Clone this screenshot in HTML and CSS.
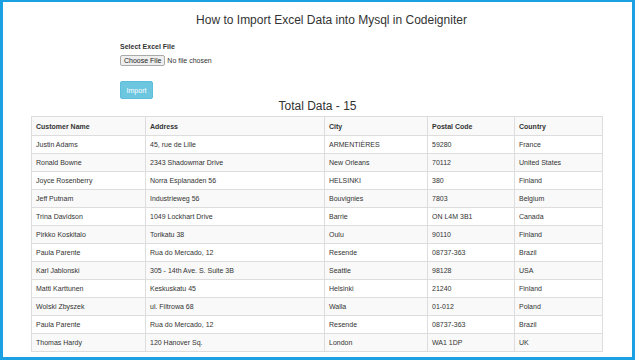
FILE: index.html
```html
<!DOCTYPE html>
<html lang="en">
<head>
    <meta charset="UTF-8">
    <meta name="viewport" content="width=device-width, initial-scale=1.0">
    <title>How to Import Excel Data into Mysql in Codeigniter</title>
    <link rel="stylesheet" href="styles.css">
</head>
<body>
    <div class="frame">
        <h3 class="title">How to Import Excel Data into Mysql in Codeigniter</h3>

        <form class="import-form" method="post" enctype="multipart/form-data">
            <label for="file">Select Excel File</label>
            <input type="file" name="file" id="file" required accept=".xls, .xlsx">
            <button type="submit" class="btn-info">Import</button>
        </form>

        <h3 class="total">Total Data - 15</h3>

        <table class="data-table">
            <colgroup>
                <col class="c-name">
                <col class="c-address">
                <col class="c-city">
                <col class="c-postal">
                <col class="c-country">
            </colgroup>
            <tbody>
                <tr>
                    <th>Customer Name</th>
                    <th>Address</th>
                    <th>City</th>
                    <th>Postal Code</th>
                    <th>Country</th>
                </tr>
                <tr><td>Justin Adams</td><td>45, rue de Lille</td><td>ARMENTIÈRES</td><td>59280</td><td>France</td></tr>
                <tr><td>Ronald Bowne</td><td>2343 Shadowmar Drive</td><td>New Orleans</td><td>70112</td><td>United States</td></tr>
                <tr><td>Joyce Rosenberry</td><td>Norra Esplanaden 56</td><td>HELSINKI</td><td>380</td><td>Finland</td></tr>
                <tr><td>Jeff Putnam</td><td>Industrieweg 56</td><td>Bouvignies</td><td>7803</td><td>Belgium</td></tr>
                <tr><td>Trina Davidson</td><td>1049 Lockhart Drive</td><td>Barrie</td><td>ON L4M 3B1</td><td>Canada</td></tr>
                <tr><td>Pirkko Koskitalo</td><td>Torikatu 38</td><td>Oulu</td><td>90110</td><td>Finland</td></tr>
                <tr><td>Paula Parente</td><td>Rua do Mercado, 12</td><td>Resende</td><td>08737-363</td><td>Brazil</td></tr>
                <tr><td>Karl Jablonski</td><td>305 - 14th Ave. S. Suite 3B</td><td>Seattle</td><td>98128</td><td>USA</td></tr>
                <tr><td>Matti Karttunen</td><td>Keskuskatu 45</td><td>Helsinki</td><td>21240</td><td>Finland</td></tr>
                <tr><td>Wolski Zbyszek</td><td>ul. Filtrowa 68</td><td>Walla</td><td>01-012</td><td>Poland</td></tr>
                <tr><td>Paula Parente</td><td>Rua do Mercado, 12</td><td>Resende</td><td>08737-363</td><td>Brazil</td></tr>
                <tr><td>Thomas Hardy</td><td>120 Hanover Sq.</td><td>London</td><td>WA1 1DP</td><td>UK</td></tr>
            </tbody>
        </table>
    </div>
</body>
</html>
```

FILE: styles.css
```css
html, body {
    margin: 0;
    padding: 0;
}
body {
    font-family: "Liberation Sans", Arial, sans-serif;
    color: #333;
    background: #fff;
}
.frame {
    box-sizing: border-box;
    width: 635px;
    height: 360px;
    border: 3px solid #1ba1e2;
    border-top-width: 2px;
    overflow: hidden;
    padding-top: 11px;
}
.title {
    margin: 0;
    padding-left: 28px;
    text-align: center;
    font-size: 12px;
    font-weight: normal;
    line-height: 14px;
}
.import-form {
    display: flex;
    flex-direction: column;
    align-items: flex-start;
    padding-left: 117px;
    margin-top: 15px;
}
.import-form label {
    font-size: 7px;
    font-weight: bold;
    line-height: 10px;
}
.import-form input[type="file"] {
    margin-top: 3px;
    font-family: inherit;
    font-size: 7px;
    color: #333;
}
.import-form input[type="file"]::file-selector-button {
    font-family: inherit;
    font-size: 7px;
    color: #222;
    background: #efefef;
    border: 1px solid #a9a9a9;
    border-radius: 2px;
    padding: 1px 3px;
    margin-right: 2px;
}
.btn-info {
    margin-top: 15px;
    width: 33px;
    height: 18px;
    padding: 0;
    font-family: inherit;
    font-size: 7px;
    color: #fff;
    background-color: #6cc6e0;
    border: 1px solid #5bbfdc;
    border-radius: 2px;
}
.total {
    margin: 0;
    text-align: center;
    font-size: 12px;
    font-weight: normal;
    line-height: 15px;
}
.data-table {
    margin: 2px 0 0 28px;
    width: 571px;
    border-collapse: collapse;
    table-layout: fixed;
    font-size: 7px;
}
.c-name { width: 114px; }
.c-address { width: 179px; }
.c-city { width: 103px; }
.c-postal { width: 87px; }
.c-country { width: 88px; }
.data-table th,
.data-table td {
    border: 1px solid #ddd;
    padding: 0 4px;
    height: 17px;
    text-align: left;
    white-space: nowrap;
}
.data-table th {
    font-weight: bold;
    height: 18px;
}
.data-table tr:nth-of-type(odd) {
    background-color: #f9f9f9;
}
```
